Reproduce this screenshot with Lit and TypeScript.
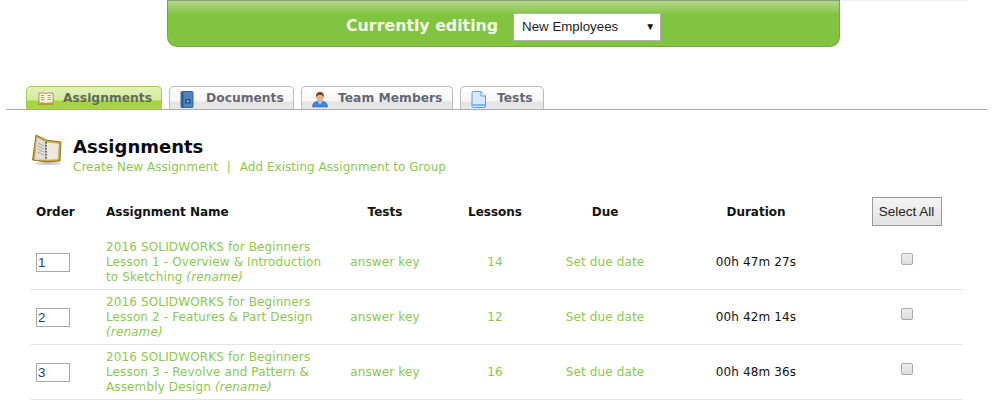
import { LitElement, html, css } from "lit";
import { customElement } from "lit/decorators.js";

const rows = [
  { n: "1", l: ["2016 SOLIDWORKS for Beginners", "Lesson 1 - Overview & Introduction", "to Sketching "], c: "14", d: "00h 47m 27s" },
  { n: "2", l: ["2016 SOLIDWORKS for Beginners", "Lesson 2 - Features & Part Design", ""], c: "12", d: "00h 42m 14s" },
  { n: "3", l: ["2016 SOLIDWORKS for Beginners", "Lesson 3 - Revolve and Pattern &", "Assembly Design "], c: "16", d: "00h 48m 36s" },
];

const icons = {
  book: html`<svg width="18" height="14" viewBox="0 0 18 14"><path d="M2 1h6l1 1 1-1h6v10h-6l-1 1-1-1H2z" fill="#fdf8e0" stroke="#8d8150" stroke-width=".8"/><path d="M4 3.500h3.500M4 5.500h3.500M4 7.500h3.500M10.500 3.500H14M10.500 5.500H14M10.500 7.500H14" stroke="#a9a070"/><path d="M1 11.500h16V13H1z" fill="#b79a30"/></svg>`,
  doc: html`<svg width="14" height="17" viewBox="0 0 14 17"><rect x="1" y=".5" width="12" height="16" rx="1" fill="#4d86bf" stroke="#3a6390"/><rect x="1.500" y="1" width="2" height="15" fill="#2f5d90"/><rect x="5" y="8" width="5.500" height="4.500" fill="#2a4f7e"/><path d="M7.750 9v2.500M6.500 10.250h2.500" stroke="#a9cbe6" stroke-width=".8"/></svg>`,
  user: html`<svg width="16" height="17" viewBox="0 0 16 17"><path d="M.5 16c0-3.500 2-6 7.500-6s7.500 2.500 7.500 6z" fill="#3f86dc" stroke="#2c62a8" stroke-width=".6"/><path d="M5.500 10.500h5L8 13z" fill="#e9eef5"/><circle cx="8" cy="6.200" r="3.800" fill="#e8b48c"/><path d="M4 6.500C3.600 2 6 1 8 1s4.400 1 4 5.500C11 4.500 10 4 8 4S5 4.500 4 6.500z" fill="#7a4526"/></svg>`,
  page: html`<svg width="15" height="17" viewBox="0 0 15 17"><path d="M1 2a1.500 1.500 0 0 1 1.500-1.500H10l4.500 4.500v10a1.500 1.500 0 0 1-1.500 1.500H2.500A1.500 1.500 0 0 1 1 15z" fill="#d8e9fb" stroke="#5a9ade"/><path d="M10 .5V5h4.500" fill="#f2f8ff" stroke="#5a9ade"/><path d="M1.500 13h12.500v2H1.500z" fill="#7db8ee"/></svg>`,
  binder: html`<svg width="32" height="32" viewBox="0 0 32 32"><ellipse cx="17" cy="29.500" rx="13" ry="1.500" fill="#ccc"/><path d="M1.500 26L5 1l10 5 15 2-1 19-14 1z" fill="#d9a81f" stroke="#7a5a14" stroke-width=".8"/><path d="M5.500 3l9 4.500.5 18.500-11.500 0z" fill="#e4ded0" stroke="#999" stroke-width=".5"/><path d="M15 8l13 1.500-1 16L15 26z" fill="#efe9dc" stroke="#aaa" stroke-width=".5"/><path d="M7 9l6 3M6.800 12l6 3M6.500 15l6.500 3M6.300 18l6.700 3" stroke="#a9a9a9"/><path d="M15 8v18" stroke="#666" stroke-width="2" stroke-dasharray="1.500 1.500"/></svg>`,
};

@customElement("app-root")
export class AppRoot extends LitElement {
  static styles = css`
    :host { display: block; width: 1000px; height: 404px; overflow: hidden; background: #fff; font-family: Verdana, "DejaVu Sans", sans-serif; color: #111; font-size: 12px; }
    .top { display: flex; height: 48px; padding-left: 167px; }
    .banner { width: 673px; height: 47px; box-sizing: border-box; border: 1px solid #74a642; border-top-color: #8a9a80; border-radius: 0 0 10px 10px; background: linear-gradient(#b2da88 0, #82c341 14px, #82c341 100%); display: flex; align-items: center; padding: 6px 0 0 178px; gap: 15px; }
    .banner .t { color: #f2fae6; font-size: 15.800px; font-weight: 700; margin-bottom: 2px; }
    .select { width: 148px; height: 28px; box-sizing: border-box; background: #fff; border: 1px solid #b0b0b0; font: 13.300px "Liberation Sans", Arial, sans-serif; color: #222; display: flex; align-items: center; justify-content: space-between; padding: 0 5px 0 8px; }
    .select i { font-style: normal; font-size: 10px; color: #111; }
    .topline { width: 128px; height: 1px; background: #eee; }
    .tabs { margin: 37px 13px 0 6px; height: 24px; border-bottom: 1px solid #aaa; padding-left: 20px; display: flex; gap: 7px; align-items: flex-end; }
    .tab { height: 23px; box-sizing: border-box; border: 1px solid #bbb; border-bottom: none; border-radius: 5px 5px 0 0; background: linear-gradient(#fff 0, #f6f6f6 14px, #e3e3e3 15px, #e9e9e9 100%); display: flex; align-items: center; color: #666673; font-weight: 700; font-size: 12.300px; white-space: nowrap; padding: 0 0 1px 10px; }
    .tab.on { border-color: #a3cc55; background: linear-gradient(#e3f2b8 0, #d5ea9e 13px, #a6d43c 14px, #a8d840 100%); color: #5c6a58; }
    .ic { display: flex; flex: none; margin-top: 3px; }
    .head { display: flex; gap: 10px; margin: 24px 0 0 31px; }
    .head h1 { margin: 1px 0 0; font-size: 18px; line-height: 24px; font-weight: 700; color: #0a0a14; }
    .links { font-size: 12px; color: #8cc850; line-height: 16px; letter-spacing: 0.03px; }
    .links span { margin: 0 5px; }
    .table { margin: 15px 0 0 30px; width: 933px; display: grid; grid-template-columns: 76px 224px 110px 110px 110px 192px 1fr; align-items: center; }
    .th { height: 45px; display: flex; align-items: center; justify-content: center; font-weight: 700; font-size: 12px; color: #111; padding-bottom: 2px; box-sizing: border-box; }
    .th.left { justify-content: flex-start; }
    .order { padding-left: 6px; }
    .last { padding-right: 2px; }
    .btn { width: 70px; height: 29px; box-sizing: border-box; border: 1px solid #999; background: linear-gradient(#f4f4f4, #e2e2e2); font: 13.500px "Liberation Sans", Arial, sans-serif; color: #222; display: flex; align-items: center; justify-content: center; }
    .cell { height: 55px; border-bottom: 1px solid #e4e4e4; display: flex; align-items: center; justify-content: center; box-sizing: border-box; font-size: 12px; letter-spacing: 0.13px; color: #111; }
    .cell.left { justify-content: flex-start; }
    .g { color: #8cc850; }
    .name { display: block; line-height: 15px; }
    .name em { font-style: italic; }
    .inp { width: 34px; height: 19px; box-sizing: border-box; border: 1px solid #aaa; margin-left: 6px; color: #1a3f7a; font: 13.300px/17px "Liberation Sans", Arial, sans-serif; padding-left: 1px; }
    .cb { width: 12px; height: 12px; box-sizing: border-box; border: 1px solid #aaa; border-radius: 2px; background: linear-gradient(#eee, #ddd); margin: 0 0 6px 0; }
  `;

  render() {
    const tab = (label: string, icon: unknown, w: number, gap: number, on = false) =>
      html`<div class="tab ${on ? "on" : ""}" style="width:${w}px"><span class="ic" style="width:${gap}px">${icon}</span>${label}</div>`;
    return html`
      <div class="top">
        <div class="banner"><span class="t">Currently editing</span><div class="select">New Employees<i>▼</i></div></div>
        <div class="topline"></div>
      </div>
      <div class="tabs">
        ${tab("Assignments", icons.book, 136, 26, true)}
        ${tab("Documents", icons.doc, 125, 26)}
        ${tab("Team Members", icons.user, 152, 26)}
        ${tab("Tests", icons.page, 84, 26)}
      </div>
      <div class="head">
        ${icons.binder}
        <div><h1>Assignments</h1><div class="links">Create New Assignment<span> | </span>Add Existing Assignment to Group</div></div>
      </div>
      <div class="table">
        <div class="th left order">Order</div>
        <div class="th left">Assignment Name</div>
        <div class="th">Tests</div>
        <div class="th">Lessons</div>
        <div class="th">Due</div>
        <div class="th">Duration</div>
        <div class="th last"><div class="btn">Select All</div></div>
        ${rows.map((r) => html`
          <div class="cell left"><div class="inp">${r.n}</div></div>
          <div class="cell left"><span class="name g">${r.l[0]}<br />${r.l[1]}${r.l[2] ? html`<br />${r.l[2]}<em>(rename)</em>` : html`<br /><em>(rename)</em>`}</span></div>
          <div class="cell g">answer key</div>
          <div class="cell g">${r.c}</div>
          <div class="cell g">Set due date</div>
          <div class="cell">${r.d}</div>
          <div class="cell last"><div class="cb"></div></div>
        `)}
      </div>
    `;
  }
}
